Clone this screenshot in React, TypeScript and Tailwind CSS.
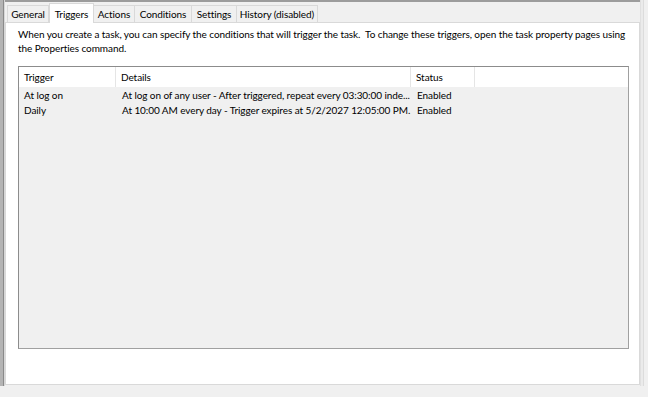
export default function App() {
  const tabs = [
    { label: 'General', w: 'w-[42px]' },
    { label: 'Triggers', w: 'w-[45px]', active: true },
    { label: 'Actions', w: 'w-[41px]' },
    { label: 'Conditions', w: 'w-[57px]' },
    { label: 'Settings', w: 'w-[45px]' },
    { label: 'History (disabled)', w: 'w-[81px]' },
  ]

  const rows = [
    { trigger: 'At log on', details: 'At log on of any user - After triggered, repeat every 03:30:00 inde...', status: 'Enabled' },
    { trigger: 'Daily', details: 'At 10:00 AM every day - Trigger expires at 5/2/2027 12:05:00 PM.', status: 'Enabled' },
  ]

  return (
    <div className="w-[648px] h-[397px] bg-[#f0f0f0] flex overflow-hidden text-[10px] tracking-[-0.08px] text-black" style={{ fontFamily: 'Lato, "Noto Sans", sans-serif' }}>
      {/* left window edge */}
      <div className="w-[5px] h-[386px] flex shrink-0">
        <div className="w-[3px] bg-[#b4b4b4]" />
        <div className="w-[1px] bg-[#8a8a8a]" />
        <div className="w-[1px] bg-[#d8d8d8]" />
      </div>

      <div className="flex flex-col w-[635px] shrink-0">
        <div className="h-[2px] bg-[#9c9c9c]" />

        {/* tab strip */}
        <div className="flex items-end h-[20px] pl-[2px]">
          {tabs.map((t) =>
            t.active ? (
              <div key={t.label} className={`${t.w} h-[20px] -mb-px z-10 bg-white border border-b-0 border-[#d9d9d9] flex items-center justify-center leading-none whitespace-nowrap`}>
                {t.label}
              </div>
            ) : (
              <div key={t.label} className={`${t.w} h-[17px] bg-[#f0f0f0] border border-b-0 border-l-0 border-[#d9d9d9] first:border-l flex items-center justify-center leading-none whitespace-nowrap`}>
                {t.label}
              </div>
            )
          )}
        </div>

        {/* tab panel */}
        <div className="h-[363px] bg-white border border-[#d9d9d9] pt-[4px] pl-[12px] pr-[4px]">
          <p className="leading-[14px]">
            When you create a task, you can specify the conditions that will trigger the task.&nbsp; To change these triggers, open the task property pages using the Properties command.
          </p>

          <div className="mt-[11px] h-[283px] w-[611px] border border-[#8c8c8c] border-r-[#a0a0a0] border-b-[#a0a0a0] bg-[#f0f0f0] flex flex-col">
            <div className="h-[20px] bg-white flex shrink-0">
              <div className="w-[97px] border-r border-[#e5e5e5] pl-[5px] flex items-center">Trigger</div>
              <div className="w-[295px] border-r border-[#e5e5e5] pl-[5px] flex items-center">Details</div>
              <div className="w-[64px] border-r border-[#e5e5e5] pl-[5px] flex items-center">Status</div>
              <div className="flex-1" />
            </div>
            <div className="pt-[1px]">
              {rows.map((r) => (
                <div key={r.trigger} className="h-[15px] flex items-center">
                  <div className="w-[97px] pl-[5px] whitespace-nowrap">{r.trigger}</div>
                  <div className="w-[295px] pl-[6px] whitespace-nowrap overflow-hidden">{r.details}</div>
                  <div className="w-[64px] pl-[6px] whitespace-nowrap">{r.status}</div>
                </div>
              ))}
            </div>
          </div>
        </div>
      </div>

      {/* right window edge */}
      <div className="flex h-[386px] shrink-0">
        <div className="w-[1px] bg-[#e0e0e0]" />
        <div className="w-[2px] bg-[#ebebeb]" />
        <div className="w-[1px] bg-[#dcdcdc]" />
        <div className="w-[4px] bg-[#f0f0f0]" />
      </div>
    </div>
  )
}
